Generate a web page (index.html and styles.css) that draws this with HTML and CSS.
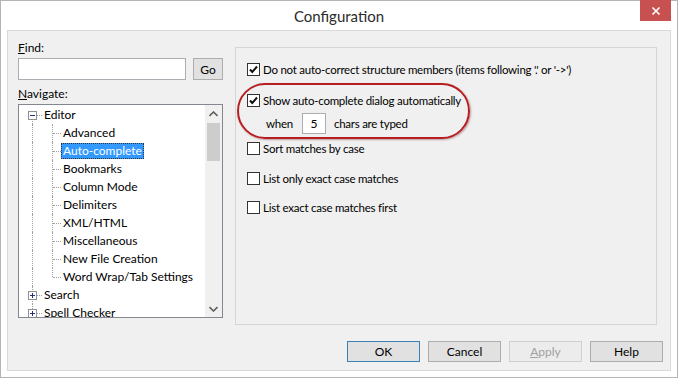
FILE: index.html
```html
<!DOCTYPE html>
<html lang="en">
<head>
    <meta charset="UTF-8">
    <title>Configuration</title>
    <link rel="stylesheet" href="styles.css">
</head>
<body>
    <div class="window">
        <div class="titlebar">
            <span class="title">Configuration</span>
            <button class="close" aria-label="Close">
                <svg width="10" height="10" viewBox="0 0 10 10"><path d="M1.5 1.5 L8.5 8.5 M8.5 1.5 L1.5 8.5" stroke="#fff" stroke-width="1.6" fill="none"/></svg>
            </button>
        </div>

        <div class="client">
            <div class="main">
                <div class="nav">
                    <div class="lbl"><u>F</u>ind:</div>
                    <div class="find-row">
                        <input class="find-input" type="text">
                        <button class="btn go">Go</button>
                    </div>
                    <div class="lbl nav-lbl"><u>N</u>avigate:</div>

                    <div class="tree">
                        <div class="tree-rows">
                            <div class="row root first"><span class="gut"><i class="exp"><b class="h"></b></i></span><span class="txt">Editor</span></div>
                            <div class="row child"><span class="gut"></span><span class="gut2"></span><span class="txt">Advanced</span></div>
                            <div class="row child"><span class="gut"></span><span class="gut2"></span><span class="txt selected">Auto-complete</span></div>
                            <div class="row child"><span class="gut"></span><span class="gut2"></span><span class="txt">Bookmarks</span></div>
                            <div class="row child"><span class="gut"></span><span class="gut2"></span><span class="txt">Column Mode</span></div>
                            <div class="row child"><span class="gut"></span><span class="gut2"></span><span class="txt">Delimiters</span></div>
                            <div class="row child"><span class="gut"></span><span class="gut2"></span><span class="txt">XML/HTML</span></div>
                            <div class="row child"><span class="gut"></span><span class="gut2"></span><span class="txt">Miscellaneous</span></div>
                            <div class="row child"><span class="gut"></span><span class="gut2"></span><span class="txt">New File Creation</span></div>
                            <div class="row child last"><span class="gut"></span><span class="gut2"></span><span class="txt">Word Wrap/Tab Settings</span></div>
                            <div class="row root"><span class="gut"><i class="exp"><b class="h"></b><b class="v"></b></i></span><span class="txt">Search</span></div>
                            <div class="row root last"><span class="gut"><i class="exp"><b class="h"></b><b class="v"></b></i></span><span class="txt">Spell Checker</span></div>
                        </div>
                        <div class="vscroll">
                            <div class="arrow">
                                <svg width="9" height="6" viewBox="0 0 9 6"><path d="M0.5 5 L4.5 1 L8.5 5" stroke="#606060" stroke-width="1.6" fill="none"/></svg>
                            </div>
                            <div class="track"><div class="thumb"></div></div>
                            <div class="arrow">
                                <svg width="9" height="6" viewBox="0 0 9 6"><path d="M0.5 1 L4.5 5 L8.5 1" stroke="#606060" stroke-width="1.6" fill="none"/></svg>
                            </div>
                        </div>
                    </div>
                </div>

                <div class="page">
                    <div class="opt opt-1">
                        <span class="check on"><svg width="11" height="11" viewBox="0 0 11 11"><path d="M2 5.5 L4.3 8 L9 2.5" stroke="#111" stroke-width="2" fill="none"/></svg></span>
                        <span>Do not auto-correct structure members (items following '.' or '-&gt;')</span>
                    </div>
                    <div class="opt opt-2">
                        <span class="check on"><svg width="11" height="11" viewBox="0 0 11 11"><path d="M2 5.5 L4.3 8 L9 2.5" stroke="#111" stroke-width="2" fill="none"/></svg></span>
                        <span>Show auto-complete dialog automatically</span>
                    </div>
                    <div class="when-row">
                        <span>when</span>
                        <input class="num" type="text" value="5">
                        <span>chars are typed</span>
                    </div>
                    <div class="opt opt-3">
                        <span class="check"></span>
                        <span>Sort matches by case</span>
                    </div>
                    <div class="opt opt-4">
                        <span class="check"></span>
                        <span>List only exact case matches</span>
                    </div>
                    <div class="opt opt-5">
                        <span class="check"></span>
                        <span>List exact case matches first</span>
                    </div>

                    <div class="highlight"></div>
                </div>
            </div>

            <div class="buttons">
                <button class="btn default">OK</button>
                <button class="btn">Cancel</button>
                <button class="btn" disabled><u>A</u>pply</button>
                <button class="btn">Help</button>
            </div>
        </div>
    </div>
</body>
</html>
```

FILE: styles.css
```css
* {
    margin: 0;
    padding: 0;
    box-sizing: border-box;
}

body {
    background-color: #ffffff;
    font-family: 'Segoe UI', Lato, 'Open Sans', sans-serif;
    font-size: 12px;
    color: #000;
}

.window {
    width: 678px;
    height: 378px;
    border: 1px solid #b4b4b4;
    background-color: #fff;
    display: flex;
    flex-direction: column;
}

.titlebar {
    height: 29px;
    position: relative;
    display: flex;
    justify-content: center;
    align-items: center;
}

.title {
    font-size: 15px;
    color: #2b2b2b;
}

.close {
    position: absolute;
    top: -1px;
    right: 6px;
    width: 31px;
    height: 21px;
    border: none;
    background-color: #c75050;
    display: flex;
    align-items: center;
    justify-content: center;
}

.client {
    flex: 1;
    margin: 0 6px 6px 6px;
    border: 1px solid #d9d9d9;
    background-color: #f0f0f0;
    display: flex;
    flex-direction: column;
}

.main {
    display: flex;
    padding-left: 10px;
}

/* left side: find + tree */
.nav {
    width: 205px;
    padding-top: 9px;
}

.lbl {
    height: 16px;
    line-height: 16px;
}

.nav-lbl {
    margin-top: 6px;
}

.find-row {
    display: flex;
    margin-top: 2px;
    height: 22px;
}

.find-input {
    width: 168px;
    height: 22px;
    border: 1px solid #abadb3;
    background: #fff;
}

.btn {
    font-family: inherit;
    font-size: 12px;
    color: #000;
    background-color: #e1e1e1;
    border: 1px solid #adadad;
}

.go {
    width: 30px;
    margin-left: 7px;
}

.tree {
    margin-top: 2px;
    height: 214px;
    border: 1px solid #828790;
    background: #fff;
    display: flex;
    overflow: hidden;
}

.tree-rows {
    flex: 1;
    overflow: hidden;
    padding-top: 1px;
}

.row {
    display: flex;
    height: 18px;
    align-items: center;
}

.gut,
.gut2 {
    position: relative;
    height: 18px;
    flex: none;
}

.gut {
    width: 23px;
}

.gut2 {
    width: 19px;
}

/* dotted connector lines */
.gut::before {
    content: "";
    position: absolute;
    left: 13px;
    top: 0;
    bottom: 0;
    border-left: 1px dotted #a0a0a0;
}

.root.first .gut::before {
    top: 9px;
}

.root.last .gut::before {
    bottom: 9px;
}

.root .gut::after {
    content: "";
    position: absolute;
    left: 14px;
    width: 9px;
    top: 9px;
    border-top: 1px dotted #a0a0a0;
}

.gut2::before {
    content: "";
    position: absolute;
    left: 10px;
    top: 0;
    bottom: 0;
    border-left: 1px dotted #a0a0a0;
}

.child.last .gut2::before {
    bottom: 9px;
}

.gut2::after {
    content: "";
    position: absolute;
    left: 11px;
    width: 8px;
    top: 9px;
    border-top: 1px dotted #a0a0a0;
}

.exp {
    position: absolute;
    left: 9px;
    top: 5px;
    width: 9px;
    height: 9px;
    border: 1px solid #919191;
    background: #fff;
    z-index: 1;
}

.exp .h {
    position: absolute;
    left: 1px;
    top: 3px;
    width: 5px;
    height: 1px;
    background: #1e3287;
}

.exp .v {
    position: absolute;
    left: 3px;
    top: 1px;
    width: 1px;
    height: 5px;
    background: #1e3287;
}

.txt {
    padding: 0 2px;
    line-height: 16px;
    white-space: nowrap;
}

.txt.selected {
    background-color: #3399ff;
    color: #fff;
    outline: 1px dotted #333;
    outline-offset: -1px;
}

.vscroll {
    width: 17px;
    background-color: #f0f0f0;
    display: flex;
    flex-direction: column;
}

.arrow {
    height: 17px;
    display: flex;
    align-items: center;
    justify-content: center;
}

.track {
    flex: 1;
}

.thumb {
    margin: 1px 2px 0 2px;
    height: 38px;
    background-color: #cdcdcd;
}

/* right side: options page */
.page {
    position: relative;
    margin-left: 12px;
    margin-top: 16px;
    width: 422px;
    height: 278px;
    border: 1px solid #d5d5d5;
    padding-left: 11px;
    font-size: 11.5px;
    letter-spacing: -0.25px;
}

.opt {
    display: flex;
    align-items: center;
    height: 16px;
    gap: 3px;
}

.opt-1 { margin-top: 13px; }
.opt-2 { margin-top: 15px; }
.opt-3 { margin-top: 6px; }
.opt-4 { margin-top: 14px; }
.opt-5 { margin-top: 13px; }

.check {
    width: 13px;
    height: 13px;
    border: 1px solid #333;
    background: #fff;
    display: flex;
    align-items: center;
    justify-content: center;
}

.when-row {
    display: flex;
    align-items: center;
    height: 22px;
    margin-top: 4px;
    padding-left: 19px;
}

.num {
    width: 24px;
    height: 21px;
    margin: 0 8px 0 9px;
    border: 1px solid #abadb3;
    background: #fff;
    text-align: center;
    font-family: inherit;
    font-size: 12px;
}

.highlight {
    position: absolute;
    left: 1px;
    top: 35px;
    width: 233px;
    height: 56px;
    border: 2px solid #b81d22;
    border-radius: 28px;
    box-shadow: 1px 1px 2px rgba(90, 0, 0, 0.35);
}

.buttons {
    margin-top: auto;
    margin-bottom: 8px;
    padding-right: 7px;
    display: flex;
    justify-content: flex-end;
    gap: 8px;
}

.buttons .btn {
    width: 73px;
    height: 21px;
}

.btn.default {
    border-color: #3c7fb1;
}

.btn:disabled {
    background-color: #ececec;
    border-color: #d0d0d0;
    color: #a0a0a0;
}
```
